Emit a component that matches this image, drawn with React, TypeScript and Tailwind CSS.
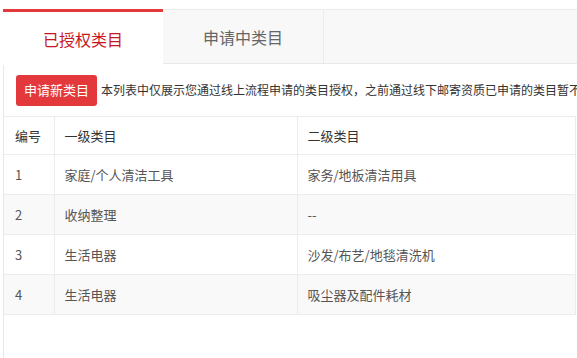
const rows = [
  { id: 1, first: "家庭/个人清洁工具", second: "家务/地板清洁用具" },
  { id: 2, first: "收纳整理", second: "--" },
  { id: 3, first: "生活电器", second: "沙发/布艺/地毯清洗机" },
  { id: 4, first: "生活电器", second: "吸尘器及配件耗材" },
];

export default function App() {
  return (
    <div
      className="w-[577px] h-[358px] overflow-hidden bg-white pt-[9px] pl-[3px] text-[#333]"
      style={{ fontFamily: '"Microsoft YaHei", "Noto Sans CJK SC", sans-serif' }}
    >
      <div className="flex h-[55px] border-b border-[#e8e8e8] bg-[#f8f8f8]">
        <div className="w-[160px] h-[56px] border-t-[3px] border-[#e4393c] bg-white flex items-center justify-center text-[16px] text-[#c81623]">
          已授权类目
        </div>
        <div className="w-[161px] border-t border-r border-[#ececec] bg-[#f8f8f8] flex items-center justify-center text-[16px] text-[#666]">
          申请中类目
        </div>
        <div className="flex-1 border-t border-[#ececec]" />
      </div>
      <div className="border-l border-[#e8e8e8] h-full">
        <div className="flex items-center h-[52px] pl-[12px] gap-[4px] whitespace-nowrap">
          <button className="h-[31px] px-[8px] rounded-[3px] bg-[#e4393c] text-white text-[13px]">
            申请新类目
          </button>
          <span className="text-[12px] text-[#333]">
            本列表中仅展示您通过线上流程申请的类目授权，之前通过线下邮寄资质已申请的类目暂不展示
          </span>
        </div>
        <table className="w-[572px] border-collapse text-[13px] text-[#555] table-fixed">
          <colgroup>
            <col className="w-[50px]" />
            <col className="w-[243px]" />
            <col />
          </colgroup>
          <thead>
            <tr className="h-[38px] border-t border-b border-[#ececec]">
              <th className="text-left font-normal text-[#333] pl-[11px] border-r border-[#ececec]">编号</th>
              <th className="text-left font-normal text-[#333] pl-[10px] border-r border-[#ececec]">一级类目</th>
              <th className="text-left font-normal text-[#333] pl-[10px] border-r border-[#ececec]">二级类目</th>
            </tr>
          </thead>
          <tbody>
            {rows.map((r) => (
              <tr
                key={r.id}
                className={`h-[40px] border-b border-[#ececec] ${r.id % 2 === 0 ? "bg-[#f9f9f9]" : "bg-white"}`}
              >
                <td className="pl-[11px] border-r border-[#ececec]">{r.id}</td>
                <td className="pl-[10px] border-r border-[#ececec]">{r.first}</td>
                <td className="pl-[10px] border-r border-[#ececec]">{r.second}</td>
              </tr>
            ))}
          </tbody>
        </table>
      </div>
    </div>
  );
}
